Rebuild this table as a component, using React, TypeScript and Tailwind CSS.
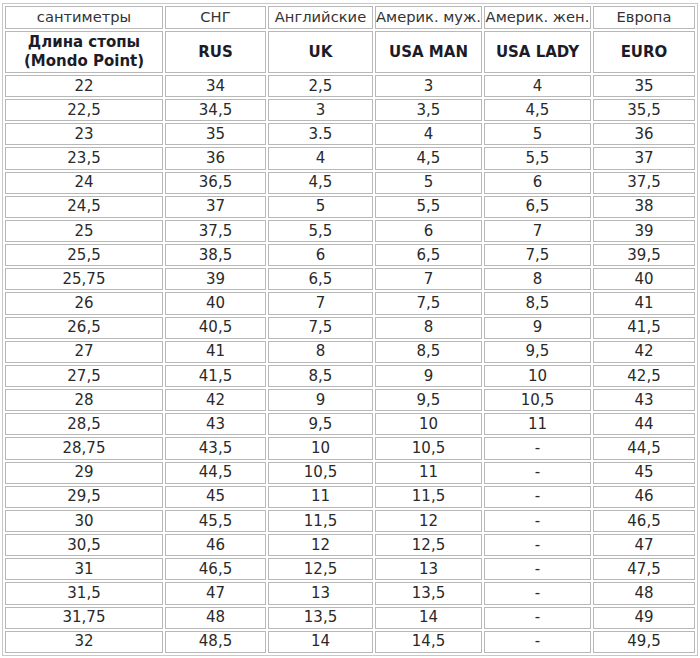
import React from "react";

const cm = ["22","22,5","23","23,5","24","24,5","25","25,5","25,75","26","26,5","27","27,5","28","28,5","28,75","29","29,5","30","30,5","31","31,5","31,75","32"];
const rus = ["34","34,5","35","36","36,5","37","37,5","38,5","39","40","40,5","41","41,5","42","43","43,5","44,5","45","45,5","46","46,5","47","48","48,5"];
const uk = ["2,5","3","3.5","4","4,5","5","5,5","6","6,5","7","7,5","8","8,5","9","9,5","10","10,5","11","11,5","12","12,5","13","13,5","14"];
const usm = ["3","3,5","4","4,5","5","5,5","6","6,5","7","7,5","8","8,5","9","9,5","10","10,5","11","11,5","12","12,5","13","13,5","14","14,5"];
const usl = ["4","4,5","5","5,5","6","6,5","7","7,5","8","8,5","9","9,5","10","10,5","11","-","-","-","-","-","-","-","-","-"];
const eur = ["35","35,5","36","37","37,5","38","39","39,5","40","41","41,5","42","42,5","43","44","44,5","45","46","46,5","47","47,5","48","49","49,5"];

const top = ["сантиметры", "СНГ", "Английские", "Америк. муж.", "Америк. жен.", "Европа"];
const sub = ["RUS", "UK", "USA MAN", "USA LADY", "EURO"];

const cell = "flex items-center justify-center border border-[#b8b8b8] bg-white text-center whitespace-nowrap";

export default function App() {
  const rows = cm.map((c, i) => [c, rus[i], uk[i], usm[i], usl[i], eur[i]]);
  return (
    <div className="w-[700px] h-[658px] bg-white pt-[3px] pl-[2px]" style={{ fontFamily: '"DejaVu Sans", Verdana, sans-serif' }}>
      <div className="w-[696px] border border-[#c8c8c8] p-[2px]">
        <div className="grid grid-cols-[158px_101px_105px_107px_107px_102px] grid-rows-[23px_42px_repeat(24,1fr)] gap-[2px] h-[647px] text-[#2a2a2a]">
          {top.map((t) => (
            <div key={t} className={`${cell} text-[14.7px] text-[#333]`}>{t}</div>
          ))}
          <div className={`${cell} flex-col text-[15px] font-bold leading-[19px] text-[#1c1c28]`}>
            <span>Длина стопы</span>
            <span>(Mondo Point)</span>
          </div>
          {sub.map((t) => (
            <div key={t} className={`${cell} text-[15px] font-bold text-[#1c1c28]`}>{t}</div>
          ))}
          {rows.map((r, i) =>
            r.map((v, j) => (
              <div key={`${i}-${j}`} className={`${cell} text-[15px] leading-none`}>{v}</div>
            ))
          )}
        </div>
      </div>
    </div>
  );
}
